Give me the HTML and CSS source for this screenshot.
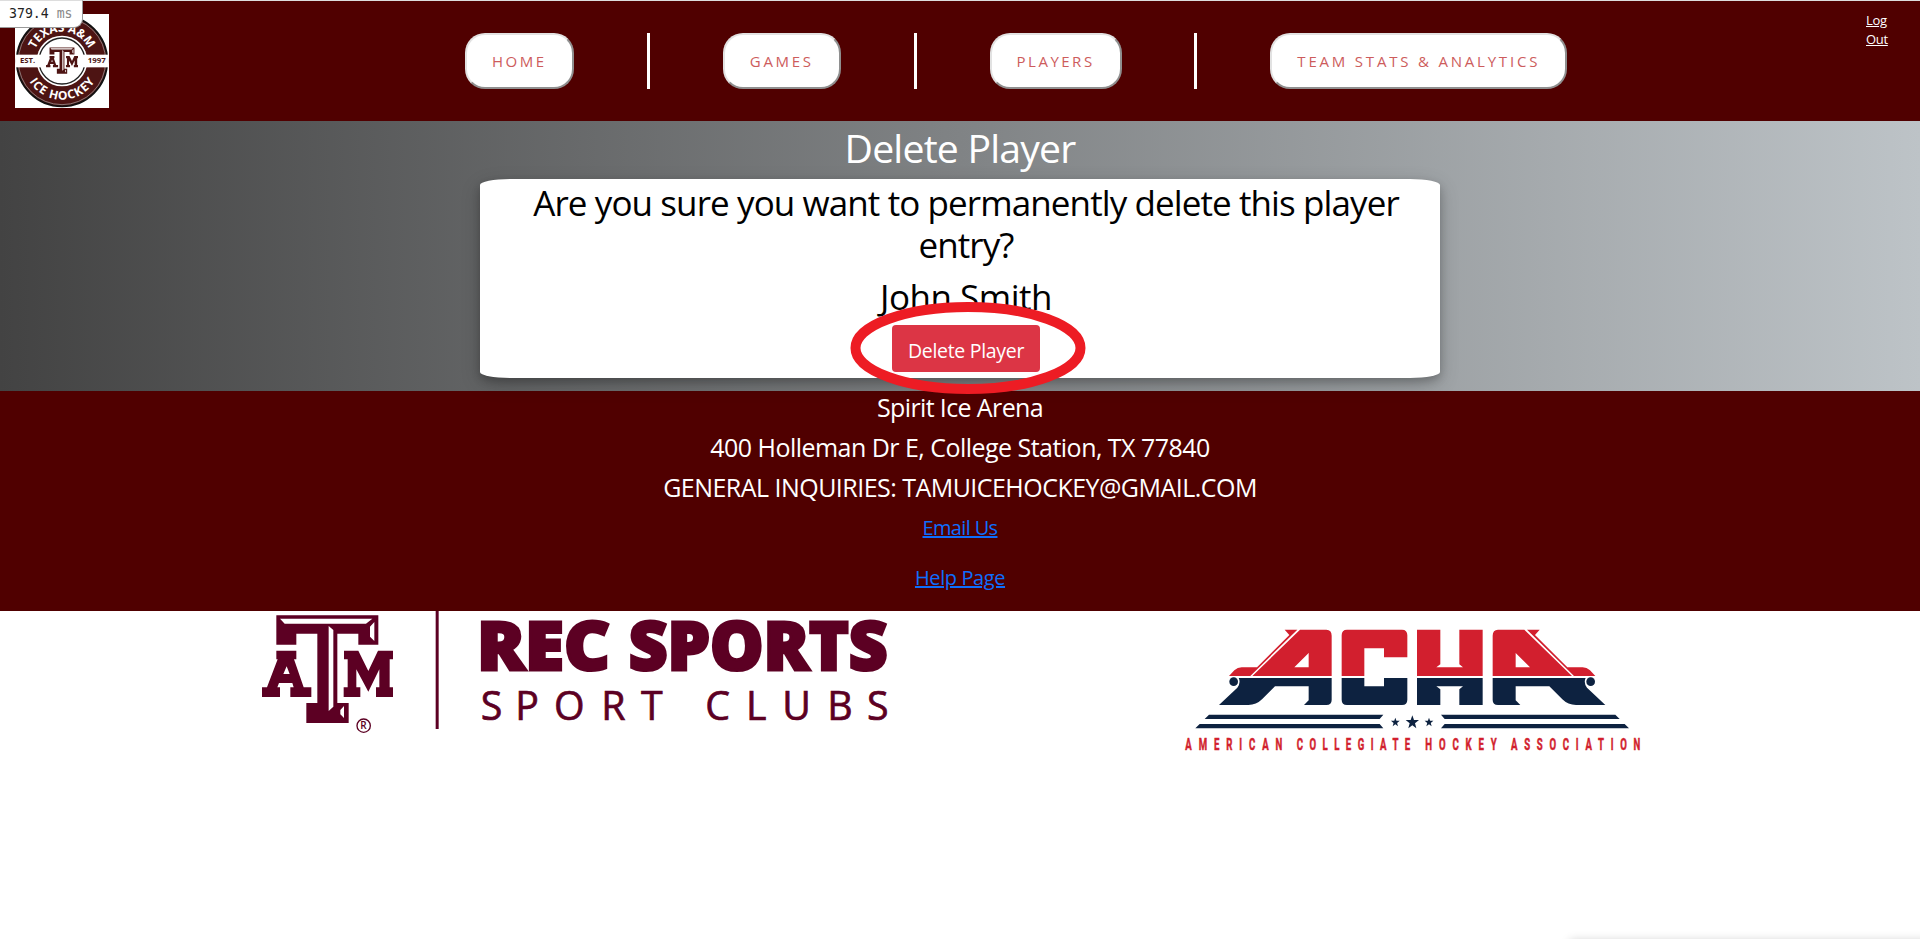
FILE: index.html
```html
<!DOCTYPE html>
<html lang="en">
<head>
<meta charset="utf-8">
<title>Delete Player</title>
<link rel="stylesheet" href="styles.css">
</head>
<body>
<div class="profiler"><span>379.4</span> <span class="unit">ms</span></div>
<header class="header">
  <svg class="club-logo" viewBox="0 0 282 282">
    <defs>
      <g id="atm">
        <path d="M109 46H415V134H355V101H292V309H326V369H199V309H232V101H169V134H109Z"/>
        <path fill-rule="evenodd" d="M109 152H169V178H162L191 262H214V291H151V262H161L157 249H117L112 262H120V291H66V262H81L113 178H109ZM140 199L130 222H149Z"/>
        <path d="M312 152H355L385 213L414 152H459V178H449V262H459V291H408V262H418V208L385 275L349 208V262H361V291H311V262H323V178H312Z"/>
        <path fill="#fff" d="M120 56H397L378 71H134ZM266 78L280 90V320L266 333ZM403 66L390 80V110L403 123ZM312 318L301 330V343L312 354Z"/>
      </g>
      <path id="arcTop" d="M53 141A88 88 0 0 1 229 141"/>
      <path id="arcBottom" d="M25 141A116 116 0 0 0 257 141"/>
    </defs>
    <rect width="282" height="282" fill="#fff"/>
    <circle cx="141" cy="141" r="136" fill="#4d1413" stroke="#111" stroke-width="5"/>
    <circle cx="141" cy="141" r="131" fill="none" stroke="#aaa" stroke-width="2"/>
    <circle cx="141" cy="141" r="76" fill="#fff"/>
    <circle cx="141" cy="141" r="69" fill="none" stroke="#222" stroke-width="4"/>
    <rect x="2" y="122" width="278" height="38" fill="#fff"/>
    <use href="#atm" fill="#4d1413" transform="translate(77 89) scale(.244)"/>
    <g class="badge-text" fill="#fff" font-size="36" text-anchor="middle">
      <text><textPath href="#arcTop" startOffset="50%" textLength="202" lengthAdjust="spacingAndGlyphs">TEXAS A&amp;M</textPath></text>
      <text><textPath href="#arcBottom" startOffset="50%" textLength="234">ICE HOCKEY</textPath></text>
    </g>
    <g class="badge-text" fill="#4d1413" font-size="20">
      <text x="15" y="148" textLength="46" lengthAdjust="spacingAndGlyphs">EST.</text>
      <text x="218" y="148" textLength="54" lengthAdjust="spacingAndGlyphs">1997</text>
    </g>
  </svg>
  <nav class="nav">
    <a class="nav-button home">HOME</a>
    <span class="divider"></span>
    <a class="nav-button games">GAMES</a>
    <span class="divider"></span>
    <a class="nav-button players">PLAYERS</a>
    <span class="divider"></span>
    <a class="nav-button stats">TEAM STATS &amp; ANALYTICS</a>
  </nav>
  <a class="logout">Log<br>Out</a>
</header>
<main class="main">
  <h1 class="title">Delete Player</h1>
  <section class="card">
    <h2 class="question">Are you sure you want to permanently delete this player<br>entry?</h2>
    <h2 class="question name">John Smith</h2>
    <button class="delete">Delete Player</button>
    <svg class="highlight" viewBox="0 0 236 92"><ellipse cx="118" cy="46" rx="112.5" ry="41" fill="none" stroke="#ed1c24" stroke-width="10"/></svg>
  </section>
</main>
<footer class="footer">
  <p class="line arena">Spirit Ice Arena</p>
  <p class="line">400 Holleman Dr E, College Station, TX 77840</p>
  <p class="line">GENERAL INQUIRIES: TAMUICEHOCKEY@GMAIL.COM</p>
  <a class="link email">Email Us</a>
  <a class="link">Help Page</a>
</footer>
<div class="sponsors">
  <svg class="rec" viewBox="60 33 1890 387">
    <g fill="#5c0023">
      <use href="#atm"/>
      <rect x="587" y="33" width="9" height="354"/>
      <circle cx="371" cy="377" r="20" fill="none" stroke="#5c0023" stroke-width="4"/>
      <text class="sans-bold" x="361" y="388" font-size="30">R</text>
      <text class="heavy" x="711" y="210" font-size="201" textLength="399" lengthAdjust="spacingAndGlyphs">REC</text>
      <text class="heavy" x="1166" y="210" font-size="201" textLength="777" lengthAdjust="spacingAndGlyphs">SPORTS</text>
      <g class="light-caps" font-size="118">
        <text x="722" y="359">S</text><text x="826" y="359">P</text><text x="942" y="359">O</text><text x="1084" y="359">R</text><text x="1203" y="359">T</text>
        <text x="1396" y="359">C</text><text x="1518" y="359">L</text><text x="1627" y="359">U</text><text x="1762" y="359">B</text><text x="1881" y="359">S</text>
      </g>
    </g>
  </svg>
  <svg class="acha" viewBox="40 3 1380 447">
    <defs>
      <g id="wing">
        <path fill="#d21f2e" fill-rule="evenodd" d="M391 59H470Q486 59 486 77V198H248ZM374 172H417V129Z"/>
        <path fill="#d21f2e" d="M345 59H383L242 198H178L194 181Q204 172 216 172H262L359 75Z"/>
        <path fill="#0d2240" d="M207 204H486V270Q486 285 470 285H403L417 271V229H316L277 268Q260 285 236 285H148L203 233Q214 218 207 204Z"/>
        <circle cx="192" cy="215" r="13" fill="#0d2240"/>
        <path fill="#0d2240" d="M118 314H641L630 327H105ZM90 342H630L641 355H77Z"/>
      </g>
      <path id="star" d="M0-21L5-7H20L8 3L12 18L0 9L-12 18L-8 3L-20-7H-5Z"/>
    </defs>
    <use href="#wing"/>
    <use href="#wing" transform="translate(1455 0) scale(-1 1)"/>
    <path fill="#d21f2e" d="M516 198V76Q516 59 532 59H697Q713 59 713 76V142H643V115H584V198ZM742 198V59H812V163L800 172H880L869 163V59H939V198Z"/>
    <path fill="#0d2240" d="M516 204H584V229H643V204H713V269Q713 285 697 285H532Q516 285 516 269ZM742 204H939V285H869V238L880 229H800L812 238V285H742Z"/>
    <g fill="#0d2240">
      <use href="#star" transform="translate(677 337) scale(.66)"/>
      <use href="#star" transform="translate(728 337)"/>
      <use href="#star" transform="translate(778 337) scale(.66)"/>
    </g>
    <g class="acha-name" fill="#d21f2e" font-size="48">
      <text transform="translate(47 419) scale(.6 1)" textLength="485">AMERICAN</text>
      <text transform="translate(381 419) scale(.6 1)" textLength="568">COLLEGIATE</text>
      <text transform="translate(767 419) scale(.6 1)" textLength="357">HOCKEY</text>
      <text transform="translate(1024 419) scale(.6 1)" textLength="647">ASSOCIATION</text>
    </g>
  </svg>
</div>
<div class="status-shadow"></div>
</body>
</html>
```
FILE: styles.css
```css
* { box-sizing: border-box; }
body {
  margin: 0;
  height: 939px;
  overflow: hidden;
  background: #fff;
  font-family: "Open Sans", "Noto Sans", sans-serif;
}
.profiler {
  position: absolute;
  left: 0;
  top: 0;
  width: 83px;
  height: 28px;
  padding-left: 9px;
  background: #fff;
  border: solid #999;
  border-width: 1px 1px 1px 0;
  border-top-color: #ddd;
  border-radius: 0 0 9px 0;
  font: 13.2px/26px "DejaVu Sans Mono", monospace;
  color: #222;
  z-index: 2;
}
.unit { color: #888; }
.header {
  display: flex;
  align-items: flex-start;
  height: 121px;
  background: #500000;
  border-top: 1px solid #ddd;
}
.club-logo { width: 94px; height: 94px; margin: 13px 0 0 15px; }
.badge-text { font-family: "Open Sans", sans-serif; font-weight: 700; }
.nav { display: flex; gap: 72.9px; margin: 32px 0 0 356px; }
.nav-button {
  height: 56px;
  padding-left: 25px;
  border: 2px solid;
  border-color: #e2e2e2 #8f8f8f #8f8f8f #e2e2e2;
  border-radius: 20px;
  background: #fff;
  color: #cd5c5c;
  font-size: 15px;
  font-weight: 400;
  line-height: 52px;
  letter-spacing: 2.5px;
  white-space: nowrap;
}
.home { width: 109px; }
.games { width: 118px; letter-spacing: 2.7px; }
.players { width: 132px; }
.stats { width: 297px; letter-spacing: 2.8px; }
.divider { width: 3px; height: 56px; background: #fff; }
.logout {
  margin: 10px 0 0 auto;
  width: 54px;
  color: #fff;
  font-size: 13px;
  line-height: 19px;
  letter-spacing: -0.3px;
  text-decoration: underline;
}
.main {
  height: 270px;
  background: linear-gradient(to right, #434343, #bdc3c7);
  text-align: center;
}
.title {
  margin: 0;
  height: 58px;
  padding-top: 3px;
  color: #fff;
  font-size: 39.2px;
  font-weight: 400;
  line-height: 48px;
  letter-spacing: -0.8px;
}
.card {
  position: relative;
  width: 960px;
  height: 199px;
  margin: 0 auto;
  padding: 3px 0 0 12px;
  background: #fff;
  border-radius: 30px / 6px;
  box-shadow: 0 4px 8px rgba(0, 0, 0, .2), 0 6px 20px rgba(0, 0, 0, .19);
}
.question {
  margin: 0;
  color: #000;
  font-size: 35px;
  font-weight: 400;
  line-height: 42px;
  letter-spacing: -0.9px;
  white-space: nowrap;
}
.name { margin-top: 10px; letter-spacing: -0.5px; }
.delete {
  display: block;
  width: 148px;
  height: 47px;
  margin: 7px auto 0;
  padding: 4px 0 0;
  border: 0;
  border-radius: 4px;
  background: #dc3545;
  color: #fff;
  font: 19.5px/30px "Open Sans", sans-serif;
  letter-spacing: -0.3px;
}
.highlight {
  position: absolute;
  left: 369.5px;
  top: 123px;
  width: 236px;
  height: 92px;
  z-index: 1;
}
.footer {
  display: flex;
  flex-direction: column;
  align-items: center;
  height: 220px;
  background: #500000;
}
.line {
  margin: 0;
  height: 40px;
  color: #fff;
  font-size: 25px;
  line-height: 32px;
  letter-spacing: -0.53px;
}
.arena { letter-spacing: -0.62px; }
.link {
  height: 50px;
  color: #0d6efd;
  font-size: 20px;
  line-height: 33px;
  letter-spacing: -0.4px;
  text-decoration: underline;
}
.email { letter-spacing: -0.65px; }
.sponsors { display: flex; padding-left: 260px; }
.rec { width: 630px; height: 129px; overflow: visible; }
.acha { width: 460px; height: 149px; margin-left: 293px; }
.heavy {
  font-family: "Open Sans", sans-serif;
  font-weight: 800;
  stroke: #5c0023;
  stroke-width: 9px;
}
.sans-bold { font-family: "Open Sans", sans-serif; font-weight: 600; }
.light-caps { font-family: "Open Sans", sans-serif; font-weight: 400; stroke: #5c0023; stroke-width: 2px; }
.acha-name {
  font-family: Roboto, sans-serif;
  font-weight: 700;
  stroke: #d21f2e;
  stroke-width: 1.5px;
}
.status-shadow {
  position: absolute;
  left: 1570px;
  top: 940px;
  width: 360px;
  height: 20px;
  box-shadow: 0 0 10px rgba(0, 0, 0, .18);
}
```
